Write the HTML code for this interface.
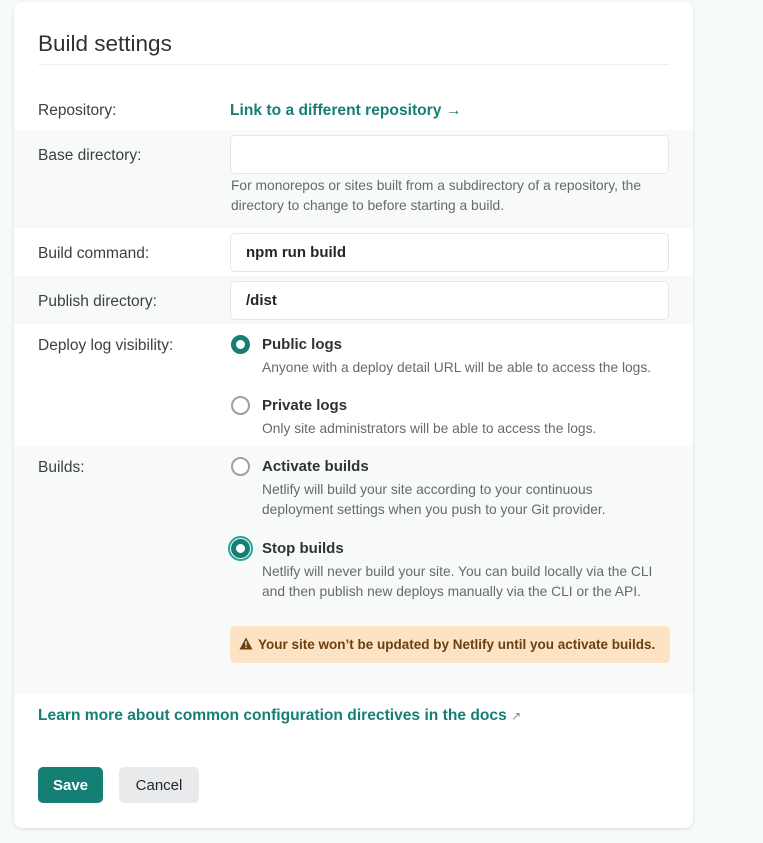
<!DOCTYPE html>
<html><head><style>
body{margin:0;width:763px;height:843px;background:#f6fafa;font-family:"Liberation Sans",sans-serif;position:relative;overflow:hidden;color:#2e3338}
.card{position:absolute;left:14px;top:2px;width:679px;height:826px;background:#fff;border-radius:8px;box-shadow:0 1px 3px rgba(0,0,0,.12)}
.a{position:absolute}
.band{position:absolute;left:14px;width:679px;background:#f8fafa}
.lbl{position:absolute;left:38px;font-size:15.5px;color:#3b4046}
.inp{position:absolute;left:230px;width:439px;height:39px;border:1.5px solid #e4e6e8;border-radius:5px;background:#fff;box-sizing:border-box;font-size:15px;font-weight:bold;padding:10px 15px;color:#22272b}
.help{position:absolute;left:262px;font-size:13.8px;color:#656a70;line-height:20px}
.opt{position:absolute;left:262px;font-size:15px;font-weight:bold;color:#2e3338}
.rad{position:absolute;left:231px;width:19px;height:19px;border-radius:50%;box-sizing:border-box;border:2px solid #9ca1a6;background:#fff}
.rad.on{border:5.5px solid #167f75;background:#fff}
.link{color:#167f75;font-weight:bold;font-size:15.6px}
</style></head><body>
<div class="card"></div>
<div class="a" style="left:38px;top:31px;font-size:22.5px;color:#2e3338">Build settings</div>
<div class="a" style="left:38px;top:64px;width:631px;height:1px;background:#eef0f0"></div>

<div class="lbl" style="top:102px">Repository:</div>
<div class="a link" style="left:230px;top:102px">Link to a different repository <span style="font-weight:normal">→</span></div>

<div class="band" style="top:130px;height:98px"></div>
<div class="lbl" style="top:147px">Base directory:</div>
<div class="inp" style="top:135px"></div>
<div class="help" style="left:231px;top:176px">For monorepos or sites built from a subdirectory of a repository, the<br>directory to change to before starting a build.</div>

<div class="lbl" style="top:245px">Build command:</div>
<div class="inp" style="top:233px">npm run build</div>

<div class="band" style="top:276px;height:48px"></div>
<div class="lbl" style="top:293px">Publish directory:</div>
<div class="inp" style="top:281px">/dist</div>

<div class="lbl" style="top:337px">Deploy log visibility:</div>
<div class="rad on" style="top:335px"></div>
<div class="opt" style="top:336px">Public logs</div>
<div class="help" style="top:358px">Anyone with a deploy detail URL will be able to access the logs.</div>
<div class="rad" style="top:396px"></div>
<div class="opt" style="top:397px">Private logs</div>
<div class="help" style="top:419px">Only site administrators will be able to access the logs.</div>

<div class="band" style="top:446px;height:248px"></div>
<div class="lbl" style="top:459px">Builds:</div>
<div class="rad" style="top:457px"></div>
<div class="opt" style="top:458px">Activate builds</div>
<div class="help" style="top:480px">Netlify will build your site according to your continuous<br>deployment settings when you push to your Git provider.</div>
<div class="a" style="left:228px;top:536px;width:25px;height:25px;border-radius:50%;border:2px solid #1fa89a;box-sizing:border-box"></div>
<div class="rad on" style="top:539px"></div>
<div class="opt" style="top:540px">Stop builds</div>
<div class="help" style="top:562px">Netlify will never build your site. You can build locally via the CLI<br>and then publish new deploys manually via the CLI or the API.</div>
<div class="a" style="left:230px;top:626px;width:440px;height:37px;background:#fde3c4;border-radius:5px"></div>
<svg class="a" style="left:239px;top:637px" width="14" height="13" viewBox="0 0 14 13"><path d="M7 0.5L13.5 12.5H0.5Z" fill="#6b3f10"/><rect x="6.3" y="4" width="1.4" height="4.5" fill="#fde3c4"/><rect x="6.3" y="9.5" width="1.4" height="1.4" fill="#fde3c4"/></svg>
<div class="a" style="left:258px;top:637px;font-size:13.5px;font-weight:bold;color:#6b3f10">Your site won’t be updated by Netlify until you activate builds.</div>

<div class="a link" style="left:38px;top:707px">Learn more about common configuration directives in the docs <span style="font-weight:normal;color:#888;font-size:12px">↗</span></div>

<div class="a" style="left:38px;top:767px;width:65px;height:36px;background:#167f75;border-radius:5px;color:#fff;font-weight:bold;font-size:15px;text-align:center;line-height:38px">Save</div>
<div class="a" style="left:119px;top:767px;width:80px;height:36px;background:#e9eaec;border-radius:5px;color:#22272b;font-size:15px;text-align:center;line-height:38px">Cancel</div>
</body></html>
